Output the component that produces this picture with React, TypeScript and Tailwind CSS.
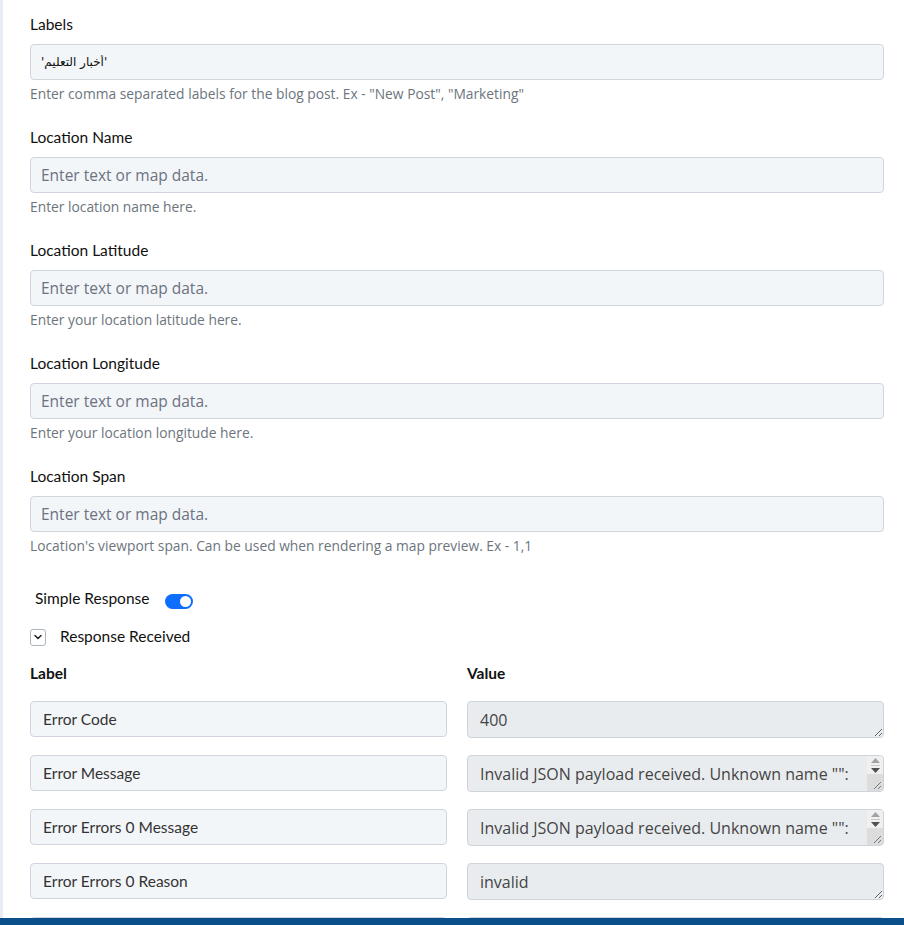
import { ChevronDown } from 'lucide-react'

const fields = [
  { label: 'Labels', value: "'أخبار التعليم'", help: 'Enter comma separated labels for the blog post. Ex - "New Post", "Marketing"' },
  { label: 'Location Name', value: '', help: 'Enter location name here.' },
  { label: 'Location Latitude', value: '', help: 'Enter your location latitude here.' },
  { label: 'Location Longitude', value: '', help: 'Enter your location longitude here.' },
  { label: 'Location Span', value: '', help: "Location's viewport span. Can be used when rendering a map preview. Ex - 1,1" },
]

const message = 'Invalid JSON payload received. Unknown name "": Root element must be a message.'

const rows = [
  { label: 'Error Code', value: '400', scroll: false },
  { label: 'Error Message', value: message, scroll: true },
  { label: 'Error Errors 0 Message', value: message, scroll: true },
  { label: 'Error Errors 0 Reason', value: 'invalid', scroll: false },
  { label: 'Error Errors 0 Domain', value: 'global', scroll: false },
]

const labelFont = "font-['Lato','Noto_Sans',sans-serif]"
const bodyFont = "font-['Open_Sans','Noto_Sans','DejaVu_Sans',sans-serif]"

function Field({ label, value, help }: { label: string; value: string; help: string }) {
  return (
    <div className="mb-[24px]">
      <p className={`${labelFont} text-[15.5px] leading-[20px] text-[#111] mb-[10px]`}>{label}</p>
      <input
        readOnly
        value={value}
        placeholder="Enter text or map data."
        className={`${value ? "font-['DejaVu_Sans',sans-serif] text-[12px] text-[#111]" : `${bodyFont} text-[15.5px]`} block w-full h-[36px] rounded-[4px] border border-[#d0d5de] bg-[#f3f6f9] px-[10px] placeholder:text-[#6b7280] outline-none`}
      />
      <p className={`${bodyFont} mt-[5px] text-[13.8px] leading-[18px] text-[#6c757d]`}>{help}</p>
    </div>
  )
}

// classic scrollbar + resize grip drawn over overflowing textareas
function FakeScrollbar() {
  return (
    <div className="pointer-events-none absolute right-[1px] top-[1px] bottom-[1px] flex w-[16px] flex-col rounded-r-[3px] bg-[#f0f0f0]">
      <div className="flex h-[18px] flex-col items-center justify-center gap-[2px]">
        <svg width="9" height="5" viewBox="0 0 9 5"><path d="M4.5 0 9 5H0z" fill="#a3a3a3" /></svg>
        <div className="h-[1px] w-[9px] bg-[#c8c8c8]" />
        <svg width="9" height="5" viewBox="0 0 9 5"><path d="M0 0h9L4.5 5z" fill="#505050" /></svg>
      </div>
      <div className="relative flex-1 bg-[#dcdcdc]">
        <svg className="absolute bottom-[1px] right-[1px]" width="9" height="9" viewBox="0 0 9 9">
          <path d="M8 1 1 8M8 5 5 8" stroke="#777" strokeWidth="1" />
        </svg>
      </div>
    </div>
  )
}

export default function App() {
  return (
    <div className="relative h-[925px] overflow-hidden bg-white">
      <div className="flex h-full">
        <div className="w-[3px] shrink-0 bg-[#e8edf3]" />
        <div className="flex-1 pl-[27px] pr-[20px] pt-[14px]">
          {fields.map((f) => (
            <Field key={f.label} {...f} />
          ))}

          <div className="mt-[34px] flex items-center pl-[5px] h-[20px]">
            <span className={`${labelFont} text-[15.5px] text-[#111]`}>Simple Response</span>
            <span className="ml-[16px] mt-[4px] flex h-[15px] w-[28px] items-center justify-end rounded-full bg-[#0d6efd] pr-[2px]">
              <span className="h-[11px] w-[11px] rounded-full bg-white" />
            </span>
          </div>

          <div className="mt-[19px] flex items-center h-[18px]">
            <span className="flex h-[17px] w-[16px] items-center justify-center rounded-[3px] border border-[#adb5bd] bg-white">
              <ChevronDown className="h-[12px] w-[12px] text-[#222]" strokeWidth={3} />
            </span>
            <span className={`${labelFont} ml-[14px] text-[15.5px] text-[#111]`}>Response Received</span>
          </div>

          <div className={`${labelFont} mt-[17px] grid grid-cols-2 gap-x-[20px] text-[15.5px] leading-[20px] font-bold text-[#111]`}>
            <span>Label</span>
            <span>Value</span>
          </div>

          <div className="mt-[18px] flex flex-col gap-[17px]">
            {rows.map((r) => (
              <div key={r.label} className="grid grid-cols-2 gap-x-[20px]">
                <input
                  readOnly
                  value={r.label}
                  className={`${labelFont} block h-[36px] w-full rounded-[4px] border border-[#d0d5de] bg-[#f3f6f9] px-[12px] text-[15.5px] text-[#333] outline-none`}
                />
                <div className="relative">
                  <textarea
                    readOnly
                    value={r.value}
                    className={`${bodyFont} block h-[37px] w-full overflow-hidden rounded-[4px] border border-[#ced4da] bg-[#e9ecef] pl-[12px] pr-[20px] pt-[6px] text-[16px] leading-[24px] text-[#444] outline-none`}
                  />
                  {r.scroll && <FakeScrollbar />}
                </div>
              </div>
            ))}
          </div>
        </div>
      </div>
      <div className="absolute bottom-0 left-0 right-0 h-[7px] bg-[#0b4f8a]" />
    </div>
  )
}
